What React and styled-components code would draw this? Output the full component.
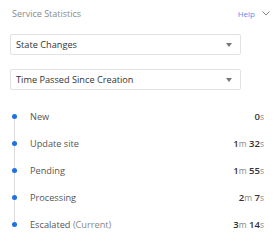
import React from "react";
import styled, { createGlobalStyle } from "styled-components";

const Global = createGlobalStyle`
  html, body { margin: 0; padding: 0; background: #fff; }
  body { font-family: "Open Sans", "Noto Sans", sans-serif; }
`;

const Panel = styled.div`
  width: 279px;
  height: 249px;
  box-sizing: border-box;
  padding: 5px 9px 0 10px;
  display: flex;
  flex-direction: column;
`;

const Header = styled.div`
  display: flex;
  align-items: center;
  justify-content: space-between;
  height: 16px;
`;

const Title = styled.div`
  font-size: 9px;
  color: #8a8a8a;
  padding-left: 2px;
`;

const HelpWrap = styled.div`
  display: flex;
  align-items: center;
  gap: 7px;
`;

const Help = styled.span`
  font-size: 8px;
  color: #5b8def;
`;

const Select = styled.div`
  margin-top: ${(p) => p.$mt}px;
  width: 231px;
  height: 21px;
  box-sizing: border-box;
  border: 1px solid #e2e2e2;
  border-radius: 2px;
  display: flex;
  align-items: center;
  justify-content: space-between;
  padding: 0 8px 0 5px;
  font-size: 9.2px;
  color: #333;
`;

const Caret = styled.span`
  width: 0;
  height: 0;
  border-left: 3px solid transparent;
  border-right: 3px solid transparent;
  border-top: 4px solid #777;
`;

const Timeline = styled.div`
  margin-top: 13px;
  display: flex;
  flex-direction: column;
`;

const Row = styled.div`
  position: relative;
  height: 27px;
  display: flex;
  align-items: center;
  justify-content: space-between;
  padding-left: 20px;
  padding-right: 6px;
`;

const Dot = styled.span`
  position: absolute;
  left: 2px;
  top: 50%;
  width: 5px;
  height: 5px;
  margin-top: -3px;
  border-radius: 50%;
  background: #1f6fe5;
  z-index: 1;
`;

const Line = styled.span`
  position: absolute;
  left: 4px;
  top: 50%;
  width: 1px;
  height: 27px;
  background: #dcdcdc;
`;

const Label = styled.span`
  font-size: 9.2px;
  color: #555;
`;

const Muted = styled.span`
  color: #888;
`;

const Value = styled.span`
  font-size: 9.5px;
  color: #333;
`;

const Num = styled.span`
  font-weight: 600;
  color: #333;
`;

const Unit = styled.span`
  font-size: 8.5px;
  color: #888;
`;

const rows = [
  { label: "New", parts: [["0", "s"]] },
  { label: "Update site", parts: [["1", "m"], ["32", "s"]] },
  { label: "Pending", parts: [["1", "m"], ["55", "s"]] },
  { label: "Processing", parts: [["2", "m"], ["7", "s"]] },
  { label: "Escalated", extra: "(Current)", parts: [["3", "m"], ["14", "s"]] },
];

export default function App() {
  return (
    <>
      <Global />
      <Panel>
        <Header>
          <Title>Service Statistics</Title>
          <HelpWrap>
            <Help>Help</Help>
            <svg width="8" height="5" viewBox="0 0 8 5">
              <path d="M0.5 0.5 L4 4 L7.5 0.5" fill="none" stroke="#888" strokeWidth="1" />
            </svg>
          </HelpWrap>
        </Header>
        <Select $mt={13}>
          <span>State Changes</span>
          <Caret />
        </Select>
        <Select $mt={14}>
          <span>Time Passed Since Creation</span>
          <Caret />
        </Select>
        <Timeline>
          {rows.map((r, i) => (
            <Row key={r.label}>
              {i < rows.length - 1 && <Line />}
              <Dot />
              <Label>
                {r.label}
                {r.extra && <Muted> {r.extra}</Muted>}
              </Label>
              <Value>
                {r.parts.map(([n, u], j) => (
                  <React.Fragment key={j}>
                    {j > 0 && " "}
                    <Num>{n}</Num>
                    <Unit>{u}</Unit>
                  </React.Fragment>
                ))}
              </Value>
            </Row>
          ))}
        </Timeline>
      </Panel>
    </>
  );
}
